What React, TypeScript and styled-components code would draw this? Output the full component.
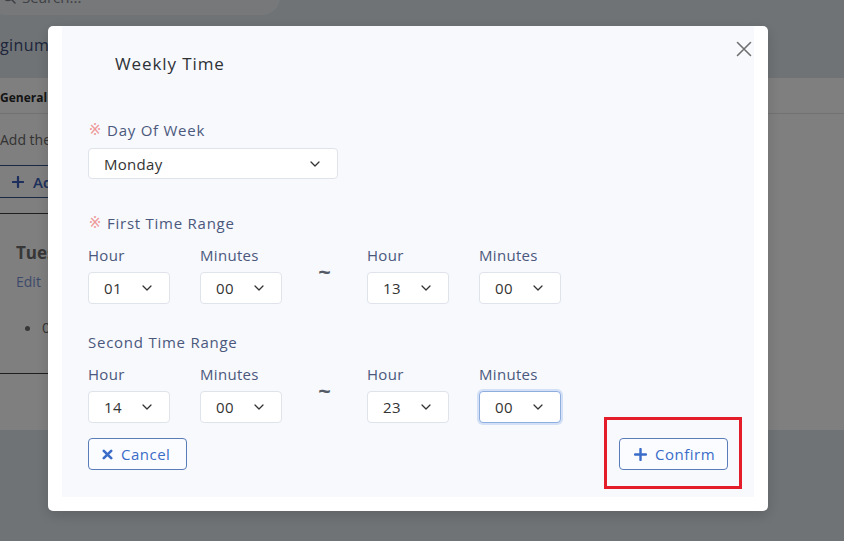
import React from "react";
import styled, { createGlobalStyle } from "styled-components";

const Global = createGlobalStyle`
  html, body { margin: 0; padding: 0; }
  body {
    background: #dee6ec;
    font-family: "Open Sans", "Liberation Sans", sans-serif;
    overflow: hidden;
  }
  * { box-sizing: border-box; }
`;

const Page = styled.div`
  width: 844px;
  height: 541px;
  overflow: hidden;
  display: flex;
  flex-direction: column;
`;

const TopArea = styled.div`
  height: 78px;
  display: flex;
  flex-direction: column;
`;

const SearchBox = styled.div`
  width: 292px;
  height: 36px;
  margin: -21px 0 0 -12px;
  border-radius: 18px;
  background: #eef1f4;
  display: flex;
  align-items: center;
  gap: 6px;
  padding-left: 14px;
  color: #7d828a;
  font-size: 15px;
`;

const PageTitle = styled.div`
  margin-top: 19px;
  font-size: 16px;
  line-height: 22px;
  font-weight: 500;
  letter-spacing: 0.4px;
  color: #3c4a78;
`;

const MainPanel = styled.div`
  height: 352px;
  background: #ffffff;
  display: flex;
  flex-direction: column;
`;

const TabBar = styled.div`
  height: 36px;
  border-bottom: 1px solid #e4e4e4;
  display: flex;
  align-items: center;
  padding-top: 3px;
  font-size: 12px;
  font-weight: 700;
  color: #2a2a2a;
`;

const Description = styled.div`
  margin-top: 16px;
  font-size: 14px;
  line-height: 20px;
  color: #666;
`;

const AddButton = styled.div`
  margin: 15px 0 0 -1px;
  width: 140px;
  height: 33px;
  border: 1px solid #34508a;
  display: flex;
  align-items: center;
  gap: 9px;
  padding-left: 12px;
  font-size: 15px;
  font-weight: 600;
  color: #3b5fb8;
`;

const DayCard = styled.div`
  margin: 15px 0 0 -2px;
  width: 420px;
  height: 161px;
  border-top: 1px solid #3c3c3c;
  border-bottom: 1px solid #3c3c3c;
  padding: 27px 0 0 18px;
  display: flex;
  flex-direction: column;
`;

const CardTitle = styled.div`
  font-size: 17px;
  line-height: 24px;
  font-weight: 700;
  color: #6e6e6e;
`;

const CardLink = styled.div`
  margin-top: 7px;
  font-size: 14px;
  line-height: 20px;
  color: #7d95d6;
`;

const CardList = styled.ul`
  margin: 25px 0 0 0;
  padding-left: 26px;
  font-size: 15px;
  line-height: 20px;
  color: #6e6e6e;
`;

const Overlay = styled.div`
  position: fixed;
  inset: 0;
  background: rgba(0, 0, 0, 0.5);
  padding: 26px 0 0 48px;
`;

const Modal = styled.div`
  width: 720px;
  height: 485px;
  background: #ffffff;
  border-radius: 5px;
  padding: 0 14px 14px 14px;
  box-shadow: 0 4px 14px rgba(0, 0, 0, 0.15);
`;

const ModalBody = styled.div`
  position: relative;
  height: 100%;
  background: #f7f9fd;
  padding: 26px 26px 27px 26px;
  display: flex;
  flex-direction: column;
  font-family: "Open Sans", "Liberation Sans", sans-serif;
`;

const CloseButton = styled.button`
  position: absolute;
  top: 14px;
  right: 1px;
  width: 18px;
  height: 18px;
  padding: 0;
  border: none;
  background: transparent;
  display: flex;
  align-items: center;
  justify-content: center;
  cursor: pointer;
`;

const Title = styled.div`
  margin-left: 27px;
  height: 24px;
  font-size: 17px;
  line-height: 24px;
  font-weight: 500;
  letter-spacing: 0.9px;
  color: #2e3237;
`;

const Label = styled.div<{ $mt: number }>`
  margin-top: ${(p) => p.$mt}px;
  height: 20px;
  display: flex;
  align-items: center;
  gap: 5px;
  font-size: 15px;
  font-weight: 500;
  letter-spacing: 0.75px;
  color: #4b587c;
`;

const Required = styled.span`
  width: 14px;
  color: #ef9a9a;
  font-family: "DejaVu Sans", sans-serif;
  font-size: 15px;
  letter-spacing: 0;
  text-align: center;
`;

const Select = styled.div<{ $w: number; $focused?: boolean }>`
  width: ${(p) => p.$w}px;
  height: 32px;
  background: #ffffff;
  border: 1px solid ${(p) => (p.$focused ? "#8eaee0" : "#dfe3ea")};
  box-shadow: ${(p) => (p.$focused ? "0 0 0 2px rgba(120,160,225,0.28)" : "none")};
  border-radius: 4px;
  padding: 0 17px 0 15px;
  display: flex;
  align-items: center;
  justify-content: space-between;
  font-size: 15px;
  letter-spacing: 0.3px;
  color: #333;
`;

const DaySelect = styled(Select)`
  margin-top: 8px;
`;

const TimeRow = styled.div<{ $mt: number }>`
  margin-top: ${(p) => p.$mt}px;
  display: flex;
  gap: 30px;
  align-items: flex-start;
`;

const TimeField = styled.div`
  display: flex;
  flex-direction: column;
  gap: 7px;
`;

const FieldLabel = styled.div`
  height: 20px;
  line-height: 20px;
  font-size: 15px;
  font-weight: 500;
  letter-spacing: 0.3px;
  color: #4b587c;
`;

const Tilde = styled.div`
  width: 25px;
  margin-top: 15px;
  text-align: center;
  font-size: 22px;
  line-height: 22px;
  font-weight: 700;
  color: #555b66;
`;

const Actions = styled.div`
  margin-top: 15px;
  display: flex;
  justify-content: space-between;
  align-items: center;
`;

const ActionButton = styled.button<{ $w: number; $pl: number }>`
  width: ${(p) => p.$w}px;
  height: 32px;
  border: 1px solid #5a7dba;
  border-radius: 4px;
  background: #fbfcff;
  display: flex;
  align-items: center;
  padding: 0 0 0 ${(p) => p.$pl}px;
  gap: 8px;
  font-family: "Open Sans", "Liberation Sans", sans-serif;
  font-size: 15px;
  font-weight: 500;
  letter-spacing: 0.5px;
  color: #3a6cc8;
  cursor: pointer;
`;

const Highlight = styled.div`
  position: relative;
`;

const RedBox = styled.span`
  position: absolute;
  left: -15px;
  right: -14px;
  top: -21px;
  bottom: -19px;
  border: 3px solid #e31e2a;
  pointer-events: none;
`;

const Chevron = () => (
  <svg width="10" height="6" viewBox="0 0 10 6" fill="none">
    <path d="M1 1 L5 5 L9 1" stroke="#333" strokeWidth="1.25" strokeLinecap="round" strokeLinejoin="round" />
  </svg>
);

const CloseIcon = () => (
  <svg width="16" height="16" viewBox="0 0 16 16" fill="none">
    <path d="M1.5 1.5 L14.5 14.5 M14.5 1.5 L1.5 14.5" stroke="#707070" strokeWidth="1.6" strokeLinecap="round" />
  </svg>
);

const CrossIcon = () => (
  <svg width="11" height="11" viewBox="0 0 11 11" fill="none">
    <path d="M1.8 1.8 L9.2 9.2 M9.2 1.8 L1.8 9.2" stroke="#3a6cc8" strokeWidth="2.6" strokeLinecap="round" />
  </svg>
);

const PlusIcon = ({ color = "#3a6cc8", size = 13 }: { color?: string; size?: number }) => (
  <svg width={size} height={size} viewBox="0 0 13 13" fill="none">
    <path d="M6.5 1 V12 M1 6.5 H12" stroke={color} strokeWidth="2.4" strokeLinecap="round" />
  </svg>
);

const SearchIcon = () => (
  <svg width="14" height="14" viewBox="0 0 14 14" fill="none">
    <circle cx="6" cy="6" r="4.5" stroke="#7d828a" strokeWidth="1.6" />
    <path d="M9.5 9.5 L13 13" stroke="#7d828a" strokeWidth="1.6" strokeLinecap="round" />
  </svg>
);

type TimeValue = { label: string; value: string; focused?: boolean };

const TimeRange = ({ mt, values }: { mt: number; values: TimeValue[] }) => (
  <TimeRow $mt={mt}>
    {values.map((v, i) => (
      <React.Fragment key={i}>
        {i === 2 && <Tilde>~</Tilde>}
        <TimeField>
          <FieldLabel>{v.label}</FieldLabel>
          <Select $w={82} $focused={v.focused}>
            <span>{v.value}</span>
            <Chevron />
          </Select>
        </TimeField>
      </React.Fragment>
    ))}
  </TimeRow>
);

export default function App() {
  return (
    <>
      <Global />
      <Page>
        <TopArea>
          <SearchBox>
            <SearchIcon />
            <span>Search...</span>
          </SearchBox>
          <PageTitle>ginum</PageTitle>
        </TopArea>
        <MainPanel>
          <TabBar>General</TabBar>
          <Description>Add the weekly time</Description>
          <AddButton>
            <PlusIcon color="#3b5fb8" size={12} />
            <span>Add</span>
          </AddButton>
          <DayCard>
            <CardTitle>Tuesday</CardTitle>
            <CardLink>Edit</CardLink>
            <CardList>
              <li>01:00 ~ 13:00</li>
            </CardList>
          </DayCard>
        </MainPanel>
      </Page>
      <Overlay>
        <Modal>
          <ModalBody>
            <CloseButton aria-label="Close">
              <CloseIcon />
            </CloseButton>
            <Title>Weekly Time</Title>
            <Label $mt={44}>
              <Required>※</Required>
              <span>Day Of Week</span>
            </Label>
            <DaySelect $w={250}>
              <span>Monday</span>
              <Chevron />
            </DaySelect>
            <Label $mt={34}>
              <Required>※</Required>
              <span>First Time Range</span>
            </Label>
            <TimeRange
              mt={12}
              values={[
                { label: "Hour", value: "01" },
                { label: "Minutes", value: "00" },
                { label: "Hour", value: "13" },
                { label: "Minutes", value: "00" },
              ]}
            />
            <Label $mt={28}>
              <span>Second Time Range</span>
            </Label>
            <TimeRange
              mt={12}
              values={[
                { label: "Hour", value: "14" },
                { label: "Minutes", value: "00" },
                { label: "Hour", value: "23" },
                { label: "Minutes", value: "00", focused: true },
              ]}
            />
            <Actions>
              <ActionButton $w={99} $pl={13}>
                <CrossIcon />
                <span>Cancel</span>
              </ActionButton>
              <Highlight>
                <ActionButton $w={109} $pl={14}>
                  <PlusIcon />
                  <span>Confirm</span>
                </ActionButton>
                <RedBox />
              </Highlight>
            </Actions>
          </ModalBody>
        </Modal>
      </Overlay>
    </>
  );
}
